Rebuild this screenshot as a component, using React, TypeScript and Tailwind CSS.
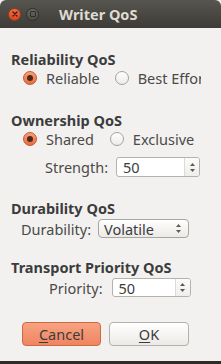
import { ReactNode } from 'react'

function Radio({ checked, label }: { checked?: boolean; label: string }) {
  return (
    <div className="flex items-center gap-[9px] shrink-0">
      {checked ? (
        <div className="w-[14px] h-[14px] rounded-full border border-[#c4592f] bg-gradient-to-b from-[#f7a07c] to-[#e9693c] flex items-center justify-center">
          <div className="w-[6px] h-[6px] rounded-full bg-[#4a2a1c]" />
        </div>
      ) : (
        <div className="w-[14px] h-[14px] rounded-full border border-[#a3a19c] bg-gradient-to-b from-white to-[#ecebe9]" />
      )}
      <span>{label}</span>
    </div>
  )
}

function Arrows() {
  return (
    <svg width="7" height="11" viewBox="0 0 7 11" className="text-[#5a5955]">
      <path d="M3.5 1 L6 4 L1 4 Z" fill="currentColor" />
      <path d="M3.5 10 L6 7 L1 7 Z" fill="currentColor" />
    </svg>
  )
}

function SpinBox({ value, width, height }: { value: string; width: string; height: string }) {
  return (
    <div className={`${width} ${height} flex rounded-[3px] border border-[#b4b2ad] bg-white overflow-hidden`}>
      <div className="flex-1 flex items-center pl-[6px] text-[#3c3c3c]">{value}</div>
      <div className="w-[15px] border-l border-[#dcdad6] bg-gradient-to-b from-[#fbfbfa] to-[#efeeec] flex items-center justify-center">
        <Arrows />
      </div>
    </div>
  )
}

function Header({ children, className }: { children: ReactNode; className?: string }) {
  return <div className={`font-bold text-[#3c3c3c] ${className ?? ''}`}>{children}</div>
}

export default function App() {
  return (
    <div className="w-[221px] h-[364px] flex flex-col bg-[#f2f1f0] overflow-hidden font-['Noto_Sans',sans-serif] text-[14.5px] leading-[18px] text-[#4a4a48]">
      {/* Title bar */}
      <div className="h-[28px] shrink-0 rounded-t-[6px] bg-gradient-to-b from-[#57554f] to-[#3c3b37] flex items-center pl-[8px]">
        <div className="w-[13px] h-[13px] rounded-full bg-gradient-to-b from-[#f26b45] to-[#d9481e] border border-[#9c3a1a] flex items-center justify-center">
          <svg width="6" height="6" viewBox="0 0 6 6">
            <path d="M1 1 L5 5 M5 1 L1 5" stroke="#3a1a0e" strokeWidth="1.3" strokeLinecap="round" />
          </svg>
        </div>
        <div className="ml-[5px] w-[13px] h-[13px] rounded-full bg-gradient-to-b from-[#6b6964] to-[#4e4c47] border border-[#2f2e2a] flex items-center justify-center">
          <div className="w-[6px] h-[6px] rounded-[1px] border border-[#2d2c29]" />
        </div>
        <div className="ml-[20px] font-bold text-[#dfdbd2]">Writer QoS</div>
      </div>

      {/* Content */}
      <div className="flex-1 flex flex-col pl-[11px] pt-[22px]">
        <Header>Reliability QoS</Header>
        <div className="mt-[1px] pl-[12px] w-[190px] overflow-hidden flex items-center gap-[15px] whitespace-nowrap">
          <Radio checked label="Reliable" />
          <Radio label="Best Effort" />
        </div>

        <Header className="mt-[24px]">Ownership QoS</Header>
        <div className="mt-[1px] pl-[12px] flex items-center gap-[16px] whitespace-nowrap">
          <Radio checked label="Shared" />
          <Radio label="Exclusive" />
        </div>
        <div className="mt-[9px] pl-[34px] flex items-center gap-[8px]">
          <span>Strength:</span>
          <SpinBox value="50" width="w-[84px]" height="h-[20px]" />
        </div>

        <Header className="mt-[22px]">Durability QoS</Header>
        <div className="mt-[2px] pl-[10px] flex items-center gap-[7px]">
          <span>Durability:</span>
          <div className="w-[91px] h-[19px] flex items-center justify-between pl-[5px] pr-[6px] rounded-[4px] border border-[#a8a6a1] bg-gradient-to-b from-white to-[#eceae7] text-[#3c3c3c]">
            <span>Volatile</span>
            <Arrows />
          </div>
        </div>

        <Header className="mt-[20px]">Transport Priority QoS</Header>
        <div className="mt-[2px] pl-[38px] flex items-center gap-[9px]">
          <span>Priority:</span>
          <SpinBox value="50" width="w-[79px]" height="h-[19px]" />
        </div>

        <div className="mt-[25px] pl-[11px] flex gap-[8px]">
          <button className="w-[79px] h-[24px] rounded-[4px] border border-[#d0683f] bg-gradient-to-b from-[#f7a382] to-[#f08460] text-[#3c3c3c]">
            <span className="underline underline-offset-2">C</span>ancel
          </button>
          <button className="w-[80px] h-[24px] rounded-[4px] border border-[#b3b1ac] bg-gradient-to-b from-white to-[#eceae7] text-[#3c3c3c]">
            <span className="underline underline-offset-2">O</span>K
          </button>
        </div>
      </div>

      {/* Desktop behind the window */}
      <div className="h-[3px] shrink-0 bg-[#2e2b27]" />
    </div>
  )
}
